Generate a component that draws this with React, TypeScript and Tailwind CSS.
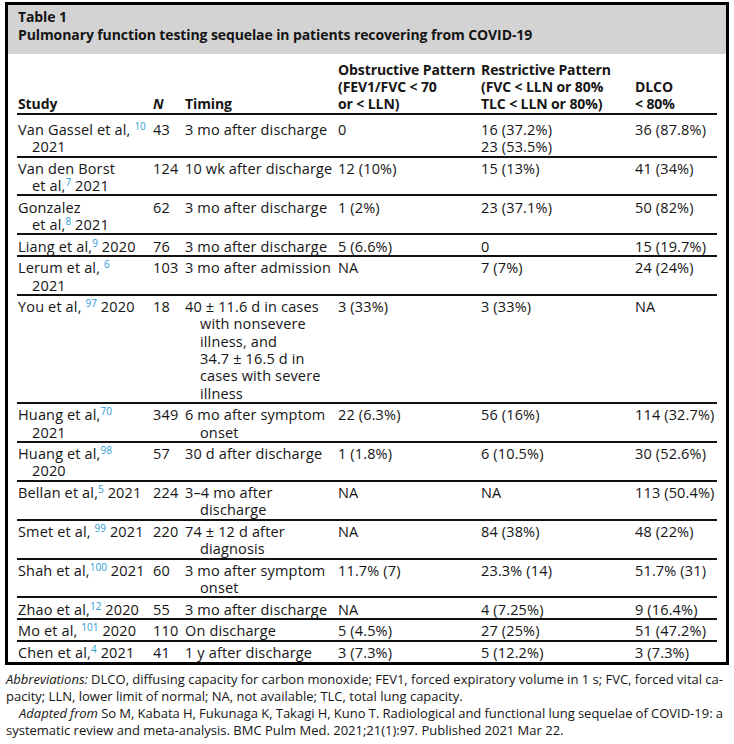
import React from "react";

type Seg = string | { s: string };

type Row = {
  study: Seg[][];
  n: string;
  timing: string[];
  obs: string[];
  res: string[];
  dlco: string[];
};

const rows: Row[] = [
  {
    study: [["Van Gassel et al, ", { s: "10" }], ["2021"]],
    n: "43",
    timing: ["3 mo after discharge"],
    obs: ["0"],
    res: ["16 (37.2%)", "23 (53.5%)"],
    dlco: ["36 (87.8%)"],
  },
  {
    study: [["Van den Borst"], ["et al,", { s: "7" }, " 2021"]],
    n: "124",
    timing: ["10 wk after discharge"],
    obs: ["12 (10%)"],
    res: ["15 (13%)"],
    dlco: ["41 (34%)"],
  },
  {
    study: [["Gonzalez"], ["et al,", { s: "8" }, " 2021"]],
    n: "62",
    timing: ["3 mo after discharge"],
    obs: ["1 (2%)"],
    res: ["23 (37.1%)"],
    dlco: ["50 (82%)"],
  },
  {
    study: [["Liang et al,", { s: "9" }, " 2020"]],
    n: "76",
    timing: ["3 mo after discharge"],
    obs: ["5 (6.6%)"],
    res: ["0"],
    dlco: ["15 (19.7%)"],
  },
  {
    study: [["Lerum et al, ", { s: "6" }], ["2021"]],
    n: "103",
    timing: ["3 mo after admission"],
    obs: ["NA"],
    res: ["7 (7%)"],
    dlco: ["24 (24%)"],
  },
  {
    study: [["You et al, ", { s: "97" }, " 2020"]],
    n: "18",
    timing: [
      "40 \u00b1 11.6 d in cases",
      "with nonsevere",
      "illness, and",
      "34.7 \u00b1 16.5 d in",
      "cases with severe",
      "illness",
    ],
    obs: ["3 (33%)"],
    res: ["3 (33%)"],
    dlco: ["NA"],
  },
  {
    study: [["Huang et al,", { s: "70" }], ["2021"]],
    n: "349",
    timing: ["6 mo after symptom", "onset"],
    obs: ["22 (6.3%)"],
    res: ["56 (16%)"],
    dlco: ["114 (32.7%)"],
  },
  {
    study: [["Huang et al,", { s: "98" }], ["2020"]],
    n: "57",
    timing: ["30 d after discharge"],
    obs: ["1 (1.8%)"],
    res: ["6 (10.5%)"],
    dlco: ["30 (52.6%)"],
  },
  {
    study: [["Bellan et al,", { s: "5" }, " 2021"]],
    n: "224",
    timing: ["3\u20134 mo after", "discharge"],
    obs: ["NA"],
    res: ["NA"],
    dlco: ["113 (50.4%)"],
  },
  {
    study: [["Smet et al, ", { s: "99" }, " 2021"]],
    n: "220",
    timing: ["74 \u00b1 12 d after", "diagnosis"],
    obs: ["NA"],
    res: ["84 (38%)"],
    dlco: ["48 (22%)"],
  },
  {
    study: [["Shah et al,", { s: "100" }, " 2021"]],
    n: "60",
    timing: ["3 mo after symptom", "onset"],
    obs: ["11.7% (7)"],
    res: ["23.3% (14)"],
    dlco: ["51.7% (31)"],
  },
  {
    study: [["Zhao et al,", { s: "12" }, " 2020"]],
    n: "55",
    timing: ["3 mo after discharge"],
    obs: ["NA"],
    res: ["4 (7.25%)"],
    dlco: ["9 (16.4%)"],
  },
  {
    study: [["Mo et al, ", { s: "101" }, " 2020"]],
    n: "110",
    timing: ["On discharge"],
    obs: ["5 (4.5%)"],
    res: ["27 (25%)"],
    dlco: ["51 (47.2%)"],
  },
  {
    study: [["Chen et al,", { s: "4" }, " 2021"]],
    n: "41",
    timing: ["1 y after discharge"],
    obs: ["3 (7.3%)"],
    res: ["5 (12.2%)"],
    dlco: ["3 (7.3%)"],
  },
];

const Lines = ({ lines, indent }: { lines: string[]; indent?: boolean }) => (
  <>
    {lines.map((l, i) => (
      <div key={i} className={i > 0 && indent ? "pl-[15px]" : ""}>
        {l}
      </div>
    ))}
  </>
);

const Study = ({ lines }: { lines: Seg[][] }) => (
  <>
    {lines.map((line, i) => (
      <div key={i} className={i > 0 ? "pl-[14px] whitespace-nowrap" : "whitespace-nowrap"}>
        {line.map((seg, j) =>
          typeof seg === "string" ? (
            <span key={j}>{seg}</span>
          ) : (
            <sup key={j} className="text-[#2f9ad4] text-[10px] tracking-normal">
              {seg.s}
            </sup>
          )
        )}
      </div>
    ))}
  </>
);

const th = "pl-[1px] pt-[7px] pb-[1px] border-b-2 border-[#111] whitespace-nowrap";

export default function App() {
  return (
    <div className="bg-white text-[#151515] pt-[2px] pl-[5px] font-['Open_Sans',sans-serif]">
      <div className="w-[724px] border-[3px] border-black">
        <div className="bg-[#d3d3d3] px-[10px] pt-[3px] pb-[10px] text-[14px] leading-[18px] font-bold tracking-[-0.1px]">
          <div>Table 1</div>
          <div>Pulmonary function testing sequelae in patients recovering from COVID-19</div>
        </div>
        <div className="pl-[9px] pr-[9px]">
          <table className="table-fixed w-[700px] text-[14.5px] leading-[17.3px] tracking-[0.15px]">
            <colgroup>
              <col className="w-[135px]" />
              <col className="w-[32px]" />
              <col className="w-[153px]" />
              <col className="w-[143px]" />
              <col className="w-[154px]" />
              <col className="w-[83px]" />
            </colgroup>
            <thead>
              <tr className="font-bold text-left align-bottom text-[14px] leading-[17px] tracking-[-0.1px]">
                <th className={th}>Study</th>
                <th className={`${th} italic`}>N</th>
                <th className={th}>Timing</th>
                <th className={th}>
                  <div>Obstructive Pattern</div>
                  <div>(FEV1/FVC &lt; 70</div>
                  <div>or &lt; LLN)</div>
                </th>
                <th className={th}>
                  <div>Restrictive Pattern</div>
                  <div>(FVC &lt; LLN or 80%</div>
                  <div>TLC &lt; LLN or 80%)</div>
                </th>
                <th className={th}>
                  <div>DLCO</div>
                  <div>&lt; 80%</div>
                </th>
              </tr>
            </thead>
            <tbody>
              {rows.map((r, i) => {
                const last = i === rows.length - 1;
                const cell = `align-top pl-[1px] whitespace-nowrap ${i === 0 ? "pt-[6px]" : "pt-[2.3px]"} ${
                  last ? "pb-[1px]" : "border-b-2 border-[#111]"
                }`;
                return (
                  <tr key={i}>
                    <td className={cell}>
                      <Study lines={r.study} />
                    </td>
                    <td className={cell}>{r.n}</td>
                    <td className={cell}>
                      <Lines lines={r.timing} indent />
                    </td>
                    <td className={cell}>
                      <Lines lines={r.obs} />
                    </td>
                    <td className={cell}>
                      <Lines lines={r.res} />
                    </td>
                    <td className={cell}>
                      <Lines lines={r.dlco} />
                    </td>
                  </tr>
                );
              })}
            </tbody>
          </table>
        </div>
      </div>
      <div className="w-[718px] mt-[6px] pl-[1px] text-[13px] leading-[17px]">
        <div className="whitespace-nowrap text-justify [text-align-last:justify] [word-spacing:-2px]">
          <i>Abbreviations:</i> DLCO, diffusing capacity for carbon monoxide; FEV1, forced expiratory volume in 1 s; FVC, forced vital ca-
        </div>
        <div>pacity; LLN, lower limit of normal; NA, not available; TLC, total lung capacity.</div>
        <div className="pl-[13px] whitespace-nowrap text-justify [text-align-last:justify] [word-spacing:-2px]">
          <i>Adapted from</i> So M, Kabata H, Fukunaga K, Takagi H, Kuno T. Radiological and functional lung sequelae of COVID-19: a
        </div>
        <div>systematic review and meta-analysis. BMC Pulm Med. 2021;21(1):97. Published 2021 Mar 22.</div>
      </div>
    </div>
  );
}
